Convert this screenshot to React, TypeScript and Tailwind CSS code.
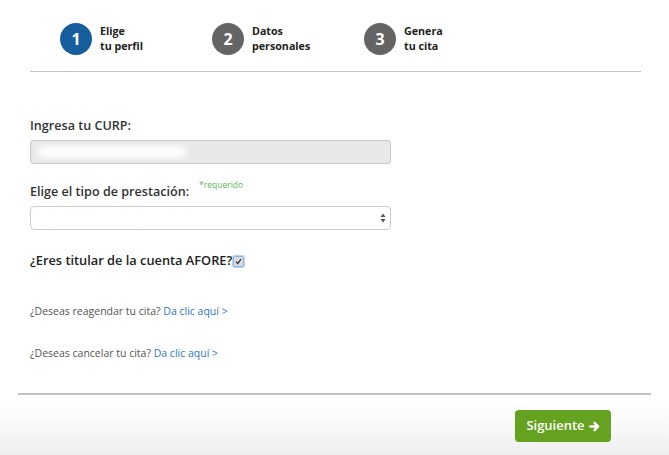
const steps = [
  { n: "1", a: "Elige", b: "tu perfil", active: true },
  { n: "2", a: "Datos", b: "personales", active: false },
  { n: "3", a: "Genera", b: "tu cita", active: false },
];

function Blur({ w }: { w: string }) {
  // redacted value in the screenshot: blurred white glyphs
  return (
    <span
      className={`block h-[12px] ${w} rounded-full bg-white blur-[3px]`}
    />
  );
}

export default function App() {
  return (
    <div className="flex h-[455px] w-full flex-col overflow-hidden bg-white font-['Open_Sans',sans-serif] text-[#333]">
      {/* Steps */}
      <div className="flex pl-[60px] pt-[23px]">
        {steps.map((s) => (
          <div key={s.n} className="flex w-[152px] items-center gap-[8px]">
            <div
              className={`flex h-[32px] w-[32px] items-center justify-center rounded-full text-[16px] font-bold text-white ${
                s.active ? "bg-[#165f9c]" : "bg-[#646464]"
              }`}
            >
              {s.n}
            </div>
            <div className="text-[10.7px] font-bold leading-[15px] text-[#222]">
              <div>{s.a}</div>
              <div>{s.b}</div>
            </div>
          </div>
        ))}
      </div>

      <div className="ml-[30px] mt-[16px] w-[611px] border-t border-[#c4c4c4]" />

      {/* Form */}
      <div className="ml-[30px] w-[361px]">
        <label className="mt-[45px] block text-[12.6px] font-semibold leading-[18px] text-[#333]">
          Ingresa tu CURP:
        </label>
        <div className="mt-[5px] flex h-[24px] items-center rounded-[3px] border border-[#c9c9c9] bg-[#e8e8e8] pl-[6px]">
          <Blur w="w-[150px]" />
        </div>

        <div className="mt-[19px] flex items-start">
          <label className="text-[12.6px] font-semibold leading-[18px] text-[#333]">
            Elige el tipo de prestación:
          </label>
          <span className="ml-[10px] -mt-[4px] text-[8.5px] leading-[12px] text-[#5cb85c]">
            *requerido
          </span>
        </div>
        <div className="mt-[5px] flex h-[24px] items-center justify-between rounded-[4px] border border-[#cccccc] bg-white pl-[14px] pr-[4px]">
          <Blur w="w-[100px]" />
          <svg width="6" height="10" viewBox="0 0 6 10" className="text-[#555]">
            <path d="M3 0.5 L5.5 4 H0.5 Z" fill="currentColor" />
            <path d="M3 9.5 L5.5 6 H0.5 Z" fill="currentColor" />
          </svg>
        </div>

        <div className="mt-[21px] flex items-center">
          <span className="text-[12.8px] font-semibold leading-[18px] text-[#222]">
            ¿Eres titular de la cuenta AFORE?
          </span>
          <span className="ml-px mt-[2px] flex h-[11px] w-[11px] items-center justify-center rounded-[2px] border border-[#8fb7e6] bg-[#dcdcdc] shadow-[0_0_0_1px_#b9d5f3]">
            <svg width="7" height="7" viewBox="0 0 7 7">
              <path d="M1 3.8 L2.8 5.5 L6 1.2" stroke="#333" strokeWidth="1.3" fill="none" />
            </svg>
          </span>
        </div>

        <p className="mt-[35px] text-[10.5px] leading-[14px] text-[#555]">
          ¿Deseas reagendar tu cita?{" "}
          <a className="text-[#2f77c0]">Da clic aquí &gt;</a>
        </p>
        <p className="mt-[28px] text-[10.5px] leading-[14px] text-[#555]">
          ¿Deseas cancelar tu cita?{" "}
          <a className="text-[#2f77c0]">Da clic aquí &gt;</a>
        </p>
      </div>

      {/* Footer */}
      <div className="flex flex-1 flex-col bg-gradient-to-b from-white from-45% to-[#efefef]">
        <div className="ml-[18px] mt-[33px] w-[633px] border-t-2 border-[#c2c2c2]" />
        <div className="mr-[58px] mt-[15px] flex justify-end">
          <button className="flex h-[32px] w-[96px] items-center justify-center gap-[4px] rounded-[4px] bg-[#64a21f] text-[13px] font-semibold text-white">
            Siguiente
            {/* chunky arrow like the icon font one */}
            <svg width="11" height="11" viewBox="0 0 12 12">
              <path
                d="M1.5 6 H9.5 M6 2 L10 6 L6 10"
                stroke="white"
                strokeWidth="2.6"
                strokeLinecap="round"
                strokeLinejoin="round"
                fill="none"
              />
            </svg>
          </button>
        </div>
      </div>
    </div>
  );
}
